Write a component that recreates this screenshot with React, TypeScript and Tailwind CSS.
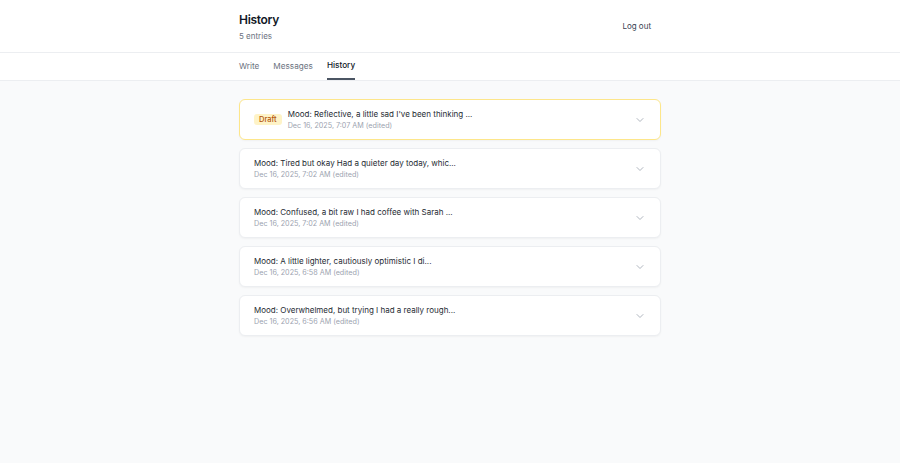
import { ChevronDown } from 'lucide-react'

type Entry = { title: string; date: string; draft?: boolean }

const entries: Entry[] = [
  { title: "Mood: Reflective, a little sad I've been thinking ...", date: 'Dec 16, 2025, 7:07 AM (edited)', draft: true },
  { title: 'Mood: Tired but okay Had a quieter day today, whic...', date: 'Dec 16, 2025, 7:02 AM (edited)' },
  { title: 'Mood: Confused, a bit raw I had coffee with Sarah ...', date: 'Dec 16, 2025, 7:02 AM (edited)' },
  { title: 'Mood: A little lighter, cautiously optimistic I di...', date: 'Dec 16, 2025, 6:58 AM (edited)' },
  { title: 'Mood: Overwhelmed, but trying I had a really rough...', date: 'Dec 16, 2025, 6:56 AM (edited)' },
]

const EntryCard = ({ entry }: { entry: Entry }) => (
  <div
    className={`flex items-center h-[41px] px-[14px] rounded-md bg-white shadow-[0_1px_2px_rgba(0,0,0,0.04)] border ${
      entry.draft ? 'border-[#fde68a]' : 'border-[#eceef1]'
    }`}
  >
    {entry.draft && (
      <span className="mr-[6px] px-[5px] h-[11px] flex items-center rounded-[3px] bg-[#fef3c7] text-[#b45309] text-[7.5px] font-medium leading-none">
        Draft
      </span>
    )}
    <div className="flex-1 min-w-0 flex flex-col">
      <span className="text-[8px] text-[#262b33] leading-[12px]">{entry.title}</span>
      <span className="text-[7.2px] text-[#9ca3af] leading-[11px]">{entry.date}</span>
    </div>
    <ChevronDown className="w-[12px] h-[12px] text-[#9ca3af]" strokeWidth={1.6} />
  </div>
)

export default function App() {
  return (
    <div className="min-h-[463px] bg-[#f9fafb] font-['Inter',sans-serif]">
      <header className="bg-white border-b border-[#eceef1]">
        <div className="w-[422px] mx-auto h-[52px] flex items-center justify-between">
          <div className="flex flex-col">
            <h1 className="text-[12px] font-semibold tracking-[-0.3px] text-[#111827] leading-[16px] mt-[1px]">History</h1>
            <span className="text-[8px] text-[#6b7280] leading-[12px] mt-[2px]">5 entries</span>
          </div>
          <button className="text-[8px] text-[#374151] mr-[10px]">Log out</button>
        </div>
      </header>
      <nav className="bg-white border-b border-[#eceef1]">
        <div className="w-[422px] mx-auto h-[27px] flex items-stretch gap-[14px] text-[8.2px]">
          <span className="flex items-center text-[#6b7280]">Write</span>
          <span className="flex items-center text-[#6b7280]">Messages</span>
          <span className="flex items-center text-[#111827] font-medium border-b-2 border-[#4b5563]">History</span>
        </div>
      </nav>
      <main className="w-[422px] mx-auto pt-[18px] flex flex-col gap-[8px]">
        {entries.map((e, i) => (
          <EntryCard key={i} entry={e} />
        ))}
      </main>
    </div>
  )
}
